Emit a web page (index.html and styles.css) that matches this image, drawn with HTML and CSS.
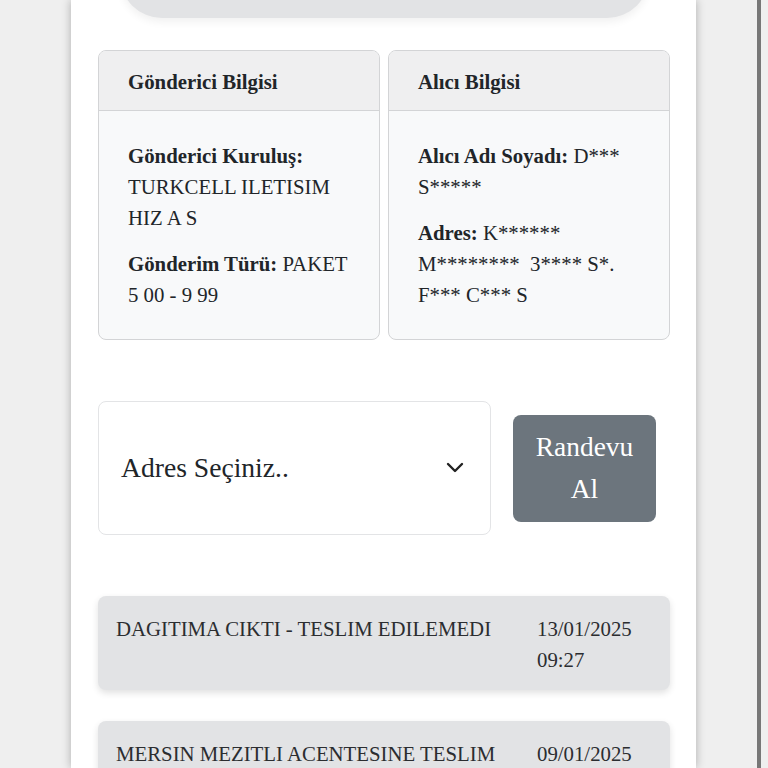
FILE: index.html
```html
<!DOCTYPE html>
<html lang="tr">
<head>
    <meta charset="UTF-8">
    <meta name="viewport" content="width=device-width, initial-scale=1.0">
    <title>Gönderi Takip</title>
    <link rel="stylesheet" href="styles.css">
</head>
<body>
    <div class="screen">
        <div class="panel">
            <div class="status-pill"></div>

            <div class="info-grid">
                <div class="card">
                    <div class="card-header">Gönderici Bilgisi</div>
                    <div class="card-body">
                        <p><b>Gönderici Kuruluş:</b> TURKCELL ILETISIM HIZ A S</p>
                        <p><b>Gönderim Türü:</b> PAKET 5 00 - 9 99</p>
                    </div>
                </div>
                <div class="card">
                    <div class="card-header">Alıcı Bilgisi</div>
                    <div class="card-body">
                        <p><b>Alıcı Adı Soyadı:</b> D*** S*****</p>
                        <p><b>Adres:</b> K****** M********&nbsp; 3**** S*. F*** C*** S</p>
                    </div>
                </div>
            </div>

            <div class="appointment">
                <div class="address-select">
                    <span>Adres Seçiniz..</span>
                    <svg class="chevron" width="18" height="12" viewBox="0 0 18 12">
                        <polyline points="2,2 9,9 16,2" fill="none" stroke="#222" stroke-width="2.4" stroke-linecap="round" stroke-linejoin="round"/>
                    </svg>
                </div>
                <button class="btn-appointment">Randevu Al</button>
            </div>

            <div class="movements">
                <div class="movement">
                    <div class="movement-text">DAGITIMA CIKTI - TESLIM EDILEMEDI</div>
                    <div class="movement-date">13/01/2025 09:27</div>
                </div>
                <div class="movement">
                    <div class="movement-text">MERSIN MEZITLI ACENTESINE TESLIM EDILDI</div>
                    <div class="movement-date">09/01/2025 14:12</div>
                </div>
            </div>
        </div>
        <div class="side"></div>
        <div class="edge"></div>
    </div>
</body>
</html>
```

FILE: styles.css
```css
html, body {
    margin: 0;
    padding: 0;
    overflow: hidden;
}

body {
    font-family: "Liberation Serif", "Times New Roman", serif;
    background-color: #efefef;
    color: #212529;
}

.screen {
    display: flex;
    align-items: stretch;
    height: 768px;
    padding-left: 71px;
    overflow: hidden;
}

.panel {
    width: 625px;
    flex: 0 0 625px;
    background-color: #fff;
    padding: 0 26px 0 27px;
    box-sizing: border-box;
    box-shadow: 0 0 9px rgba(0, 0, 0, 0.28);
    position: relative;
    z-index: 1;
}

.side {
    flex: 0 0 61px;
}

.edge {
    flex: 0 0 4px;
    background-color: #777;
}

.status-pill {
    height: 60px;
    margin: -42px 21px 0 22px;
    background-color: #e2e3e5;
    border-radius: 0 0 42px 42px;
    box-shadow: 0 4px 8px rgba(0, 0, 0, 0.06);
}

.info-grid {
    display: grid;
    grid-template-columns: 1fr 1fr;
    gap: 8px;
    margin-top: 32px;
}

.card {
    border: 1px solid #d3d4d6;
    border-radius: 8px;
    background-color: #f8f9fa;
    overflow: hidden;
}

.card-header {
    background-color: #efeff0;
    border-bottom: 1px solid #d3d4d6;
    padding: 16px 29px 13px;
    font-size: 20.8px;
    font-weight: bold;
    line-height: 30px;
}

.card-body {
    padding: 29px 29px 14px;
    font-size: 20.8px;
    line-height: 31px;
}

.card-body p {
    margin: 0 0 15px;
}

.appointment {
    display: flex;
    align-items: center;
    gap: 22px;
    margin-top: 61px;
}

.address-select {
    width: 393px;
    height: 134px;
    box-sizing: border-box;
    border: 1px solid #e3e4e6;
    border-radius: 8px;
    display: flex;
    align-items: center;
    justify-content: space-between;
    padding: 0 26px 0 22px;
    font-size: 27.6px;
    color: #212529;
}

.chevron {
    display: block;
}

.btn-appointment {
    width: 143px;
    height: 107px;
    border: none;
    border-radius: 8px;
    background-color: #6c757d;
    color: #fff;
    font-family: inherit;
    font-size: 27.4px;
    line-height: 42px;
    padding: 0 16px;
}

.movements {
    display: flex;
    flex-direction: column;
    gap: 31px;
    margin-top: 61px;
}

.movement {
    display: grid;
    grid-template-columns: 1fr 115px;
    gap: 20px;
    background-color: #e2e3e5;
    border-radius: 8px;
    padding: 17px 18px 15px;
    font-size: 20.8px;
    line-height: 31px;
    color: #2b2d30;
    box-shadow: 0 3px 7px rgba(0, 0, 0, 0.12);
}
```
